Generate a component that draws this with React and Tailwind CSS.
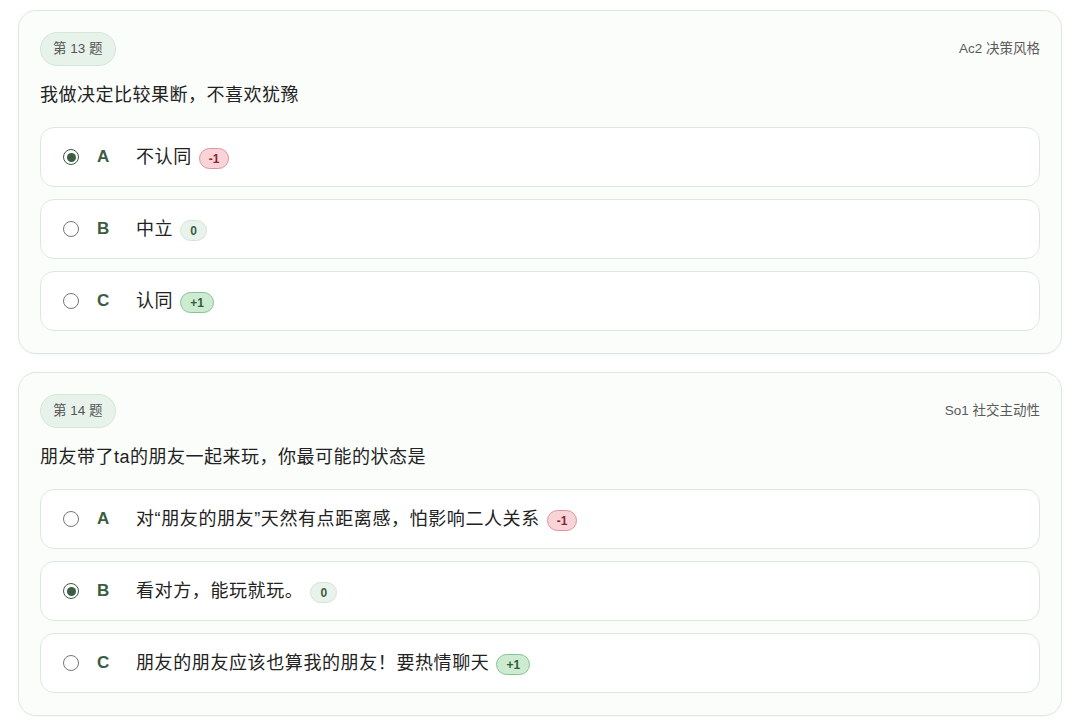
import React from "react";

const questions = [
  {
    no: 13,
    tag: "Ac2 决策风格",
    text: "我做决定比较果断，不喜欢犹豫",
    selected: "A",
    options: [
      { key: "A", text: "不认同", score: -1 },
      { key: "B", text: "中立", score: 0 },
      { key: "C", text: "认同", score: 1 },
    ],
  },
  {
    no: 14,
    tag: "So1 社交主动性",
    text: "朋友带了ta的朋友一起来玩，你最可能的状态是",
    selected: "B",
    options: [
      { key: "A", text: "对“朋友的朋友”天然有点距离感，怕影响二人关系", score: -1 },
      { key: "B", text: "看对方，能玩就玩。", score: 0 },
      { key: "C", text: "朋友的朋友应该也算我的朋友！要热情聊天", score: 1 },
    ],
  },
];

function ScoreBadge({ score }) {
  if (score < 0) {
    return (
      <span className="ml-[7px] mt-[3px] inline-flex h-[21px] items-center rounded-full border border-[#e0929b] bg-[#f8d3d7] px-[9px] text-[12px] font-bold text-[#8a2630]">
        {score}
      </span>
    );
  }
  if (score > 0) {
    return (
      <span className="ml-[7px] mt-[3px] inline-flex h-[21px] items-center rounded-full border border-[#86c491] bg-[#cdebd1] px-[9px] text-[12px] font-bold text-[#2f5c38]">
        +{score}
      </span>
    );
  }
  return (
    <span className="ml-[7px] mt-[3px] inline-flex h-[21px] items-center rounded-full border border-[#d3e5d6] bg-[#e9f3eb] px-[9px] text-[12px] font-bold text-[#3d5e44]">
      {score}
    </span>
  );
}

function Radio({ checked }) {
  return checked ? (
    <span className="flex h-[16px] w-[16px] items-center justify-center rounded-full border-[1.5px] border-[#3b5d42] bg-white">
      <span className="h-[9px] w-[9px] rounded-full bg-[#3b5d42]" />
    </span>
  ) : (
    <span className="h-[16px] w-[16px] rounded-full border border-[#777] bg-white" />
  );
}

function QuestionCard({ q }) {
  return (
    <div className="rounded-[18px] border border-[#dbe9dd] bg-[#fbfdfb] px-[21px] pb-[22px] pt-[21px] shadow-[0_1px_3px_rgba(0,0,0,0.03)]">
      <div className="flex items-center justify-between">
        <span className="inline-flex h-[34px] items-center rounded-full border border-[#d4e7d8] bg-[#e7f3ea] px-[12px] text-[13.5px] text-[#555]">
          第 {q.no} 题
        </span>
        <span className="text-[13.5px] text-[#5a5a5a]">{q.tag}</span>
      </div>
      <div className="mt-[16px] text-[18px] leading-[26px] tracking-[0.5px] text-[#222]">{q.text}</div>
      <div className="mt-[19px] flex flex-col gap-[12px]">
        {q.options.map((o) => (
          <div
            key={o.key}
            className="flex h-[60px] items-center rounded-[14px] border border-[#dbe9dd] bg-white pl-[22px] pr-4"
          >
            <Radio checked={q.selected === o.key} />
            <span className="ml-[18px] w-[39px] text-[17px] font-bold text-[#3b5d42]">{o.key}</span>
            <span className="text-[18px] tracking-[0.6px] text-[#222]">{o.text}</span>
            <ScoreBadge score={o.score} />
          </div>
        ))}
      </div>
    </div>
  );
}

export default function App() {
  return (
    <div
      className="min-h-screen bg-white px-[18px] pt-[10px]"
      style={{ fontFamily: '"Liberation Sans", "Noto Sans CJK SC", sans-serif' }}
    >
      <div className="flex w-[1044px] flex-col gap-[18px]">
        {questions.map((q) => (
          <QuestionCard key={q.no} q={q} />
        ))}
      </div>
    </div>
  );
}
